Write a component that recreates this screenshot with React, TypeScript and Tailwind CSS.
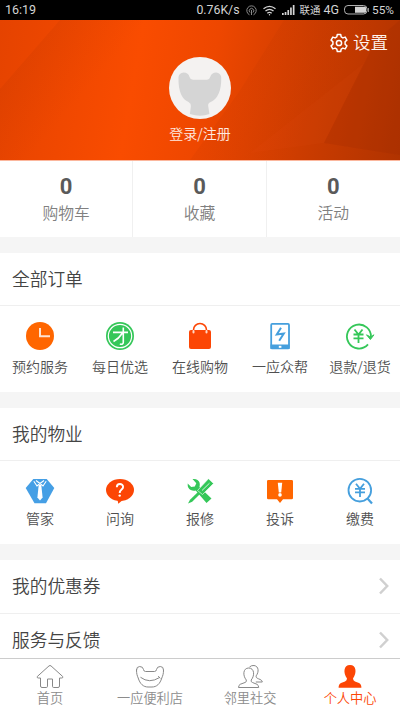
import { ReactNode } from "react";

const stats = [
  { value: 0, label: "购物车" },
  { value: 0, label: "收藏" },
  { value: 0, label: "活动" },
];

function ClockIcon() {
  return (
    <svg width="28" height="28" viewBox="0 0 28 28" fill="none">
      <circle cx="14" cy="14" r="14" fill="#ff6600" />
      <path d="M14 6v8.2h10" stroke="#ffe3d0" strokeWidth="2" />
    </svg>
  );
}

function GroupIcon() {
  return (
    <svg width="28" height="28" viewBox="0 0 28 28" fill="none">
      <circle cx="14" cy="14" r="14" fill="#35c759" />
      <circle cx="14" cy="14" r="11.7" stroke="#fff" strokeWidth="1.2" />
      <path
        d="M7 10.400h15M17.300 5.500v14.800q0 2.700-3.500 1.700M16.500 11q-3.500 5.500-9 8.500"
        stroke="#fff"
        strokeWidth="1.6"
      />
    </svg>
  );
}

function BagIcon() {
  return (
    <svg width="28" height="28" viewBox="0 0 28 28" fill="none">
      <path d="M7.500 10V8a6.500 6.500 0 0 1 13 0v2" stroke="#fc4605" strokeWidth="1.600" />
      <rect x="3" y="8" width="22" height="19" rx="2" fill="#fc4605" />
      <path d="M7.500 9v1.600M20.500 9v1.600" stroke="#ffd9c8" strokeWidth="2" strokeLinecap="round" />
    </svg>
  );
}

function PhoneIcon() {
  return (
    <svg width="28" height="28" viewBox="0 0 28 28" fill="none">
      <rect x="5.200" y="1.900" width="17.800" height="24.500" rx="1" stroke="#459fdd" strokeWidth="1.800" />
      <path d="M4.500 22.500h19V27h-19z" fill="#459fdd" />
      <rect x="12.800" y="23.800" width="2.600" height="2" fill="#fff" />
      <path d="M15 5.800l-4.200 6.700 7-1L13.200 18.800" stroke="#459fdd" strokeWidth="2" />
    </svg>
  );
}

function RefundIcon() {
  return (
    <svg width="30" height="28" viewBox="0 0 30 28" fill="none" stroke="#35c759" strokeWidth="1.800">
      <path d="M23 22.400A12 12 0 1 1 25.900 15.500" />
      <path d="M21.500 12.800l4.200 2.200 3.300-2.200-3.600 4.700z" fill="#35c759" strokeWidth="1" />
      <path d="M9.500 7.500l4 5 4-5M8.500 12.500h10M8.500 16.300h10M13.500 12.500V21" />
    </svg>
  );
}

function ButlerIcon() {
  return (
    <svg width="30" height="28" viewBox="0 0 30 28" fill="none">
      <path d="M8.300 2h13.400l7.600 9L21 26.300H9.500L.7 11z" fill="#459fe5" />
      <path d="M8.800 4.200l3.200 4.800 3-2.500 3 2.500 3.200-4.800M11 3.500l4 3 4-3" stroke="#fff" strokeWidth="1.100" />
      <path d="M13.700 8h2.600l1.300 12.500-2.600 3-2.600-3z" fill="#fff" />
    </svg>
  );
}

function AskIcon() {
  return (
    <svg width="28" height="28" viewBox="0 0 28 28" fill="none">
      <ellipse cx="14" cy="13" rx="14" ry="10.900" fill="#fc4605" />
      <path d="M11.500 22.500l.8 4.200 5-4.200z" fill="#fc4605" />
      <path
        d="M10.800 10.300c0-4.500 6.300-4.200 6.300-.4 0 2.600-3.400 2.600-3.400 6"
        stroke="#fff"
        strokeWidth="1.900"
      />
      <circle cx="13.700" cy="18.600" r="1.200" fill="#fff" />
    </svg>
  );
}

function RepairIcon() {
  return (
    <svg width="28" height="28" viewBox="0 0 28 28" fill="none">
      <path
        d="M1.700 6.500q-.4 4.700 3 6.500 2.700 1.200 5 .5L20.500 26l5-4.500L13.500 10Q14.700 5 11.500 3 9.500 1.500 6.500 2l3.800 4.200-1.500 3.300-3.600.6z"
        fill="#35c759"
      />
      <path d="M11.500 13.500L22.500 1.700l5 4.800-11 11z" fill="#35c759" stroke="#fff" strokeWidth=".6" />
      <path d="M12 15L4 22.700 2 26.500l4.200-1.700L14 17z" fill="#35c759" />
      <path d="M16 13.500l7.500-7.300" stroke="#fff" strokeWidth=".8" />
    </svg>
  );
}

function ComplainIcon() {
  return (
    <svg width="28" height="28" viewBox="0 0 28 28" fill="none">
      <path d="M2.300 3h23.400q1.300 0 1.300 1.300v16.700q0 1.300-1.300 1.300H17l-3 3.700-3-3.700H2.300Q1 22.300 1 21V4.300Q1 3 2.300 3z" fill="#ff6600" />
      <path d="M11.800 5.700h4.400l-1 9.800h-2.400z" fill="#fff" />
      <circle cx="14" cy="17.900" r="1.800" fill="#fff" />
    </svg>
  );
}

function PayIcon() {
  return (
    <svg width="28" height="28" viewBox="0 0 28 28" fill="none" stroke="#459fdd" strokeWidth="1.800">
      <circle cx="13.800" cy="13.200" r="11.300" />
      <path d="M21.500 21.500l4.500 5" strokeWidth="2.200" />
      <path d="M10 6.800l4 5 4-5M9 11.800h10M9 15.400h10M14 11.800V20" />
    </svg>
  );
}

function GearIcon() {
  return (
    <svg width="18" height="20" viewBox="0 0 18 20" fill="none" stroke="#fff" strokeWidth="1.500" strokeLinejoin="round">
      <path d="M7.300 1.500h3.400l.5 2.400 1.700 1 2.300-.8 1.700 3-1.800 1.700v2.400l1.800 1.700-1.700 3-2.300-.8-1.700 1-.5 2.400H7.300l-.5-2.400-1.700-1-2.300.8-1.700-3 1.800-1.700V8.800L1.100 7.100l1.700-3 2.300.8 1.700-1z" />
      <circle cx="9" cy="10" r="2.600" />
    </svg>
  );
}

function HomeIcon() {
  return (
    <svg width="28" height="26" viewBox="0 0 28 26" fill="none" stroke="#888" strokeWidth="1" strokeLinejoin="round">
      <path d="M13 1.900L1.300 12.500q-.6 1.500 1 1.500h2.200v8q0 1.500 1.500 1.500h4.300q1.200 0 1.200-1.200V15h5v7.300q0 1.200 1.200 1.200H22q1.500 0 1.500-1.500v-8h2.200q1.600 0 1-1.500L15 1.900q-1-.8-2 0z" />
    </svg>
  );
}

function ShopIcon() {
  return (
    <svg width="30" height="26" viewBox="0 0 30 26" fill="none" stroke="#888" strokeWidth="1" strokeLinecap="round">
      <path d="M1.500 6Q1.500 2.500 4.700 2.500 8 2.500 8.500 5.500q.3 2 2 2h9q1.700 0 2-2 .5-3 3.800-3 3.200 0 3.200 3.500c0 4-.7 5.500-1.700 8C25 20 21.500 23 17 23h-4C8.500 23 5 20 3.200 14 2.200 11.500 1.500 10 1.500 6z" />
      <path d="M5.800 13.500q8.500 6.500 18.500.2M23.500 12.400l1.500 1.700" />
    </svg>
  );
}

function FriendsIcon() {
  return (
    <svg width="26" height="26" viewBox="0 0 26 26" fill="none" stroke="#888" strokeWidth="1" strokeLinejoin="round">
      <path d="M9.300 16C5.500 11.500 6 4 11.700 4S18 11.500 14.200 16q-.5 2 1.300 2.500l4.500 1.800q1.500.7 1.700 3.200H1.500q.2-2.500 1.700-3.200L8 18.500q1.800-.5 1.300-2.500z" />
      <path d="M12.500 3Q14.500 1.200 17 1.500c5 .7 5 6.500 2.200 10.300-.4 1.500.3 2.200 2.300 3 2.500 1 3.500 1.500 3.800 3.200h-6.500" />
    </svg>
  );
}

function ProfileIcon() {
  return (
    <svg width="26" height="26" viewBox="0 0 26 26" fill="#fc4605">
      <path d="M10 14.500C6 9 6.500 1 13 1s7 8 3 13.500q0 2.200 2 2.900l4 1.500q2.400 1 2.400 4.800H1.600q0-3.800 2.400-4.800l4-1.500q2-.7 2-2.900z" />
    </svg>
  );
}

function Chevron() {
  return (
    <svg width="10" height="18" viewBox="0 0 10 18" fill="none" stroke="#d0d0d0" strokeWidth="2.500">
      <path d="M1 1.500L8.200 9 1 16.500" />
    </svg>
  );
}

function StatusBar() {
  return (
    <header className="flex h-5 items-center bg-black pl-[5px] pr-[6px] font-['Roboto','Noto_Sans_CJK_SC',sans-serif] text-[12px] font-normal leading-5 text-[#d4d4d4]">
      <span className="text-[12.500px]">16:19</span>
      <span className="ml-auto text-[12.300px]">0.76K/s</span>
      <svg className="ml-[6px]" width="11" height="11" viewBox="0 0 11 11" fill="none" stroke="#888">
        <path d="M3.500 9.800a4.700 4.700 0 1 1 4 0" />
        <path d="M4 7.500a2.300 2.300 0 1 1 3 0M5.500 5v5" />
      </svg>
      <svg className="ml-[6px]" width="13" height="11" viewBox="0 0 13 11" fill="none" stroke="#d4d4d4" strokeWidth="1.300">
        <path d="M.5 3.800q6-5 12 0M2.500 6q4-3.400 8 0M4.300 8.200q2.200-1.800 4.400 0" />
        <circle cx="6.500" cy="9.700" r=".7" fill="#d4d4d4" stroke="none" />
      </svg>
      <svg className="ml-[6px]" width="13" height="10" viewBox="0 0 13 10" fill="#d4d4d4">
        <path d="M0 8h1.700v2H0zM2.700 7h1.700v3H2.700zM5.400 5h1.700v5H5.400zM8.100 2.500h1.700V10H8.100zM10.800 0h1.700v10h-1.700z" />
      </svg>
      <span className="ml-[5px] whitespace-nowrap font-['Noto_Sans_CJK_SC',sans-serif] text-[10.500px]">联通</span>
      <span className="ml-[3px] text-[12.500px]">4G</span>
      <svg className="ml-[5px]" width="25" height="10" viewBox="0 0 25 10" fill="none">
        <rect x=".5" y=".5" width="22.500" height="8.500" rx="3.500" stroke="#b0b0b0" />
        <path d="M11 1.800h10q1 0 1 1v4q0 1-1 1H11z" fill="#d4d4d4" />
        <path d="M24.300 3v4" stroke="#b0b0b0" />
      </svg>
      <span className="ml-[3px] text-[11.800px]">55%</span>
    </header>
  );
}

function Banner() {
  return (
    <section className="relative h-[140px] overflow-hidden bg-[linear-gradient(100deg,#e54300_0%,#f94c00_34%,#ee4700_52%,#cc3c00_76%,#b03300_100%)]">
      <svg className="absolute inset-0" width="400" height="140" viewBox="0 0 400 140">
        <defs>
          <linearGradient id="fold" gradientUnits="userSpaceOnUse" x1="28" y1="34" x2="80" y2="79">
            <stop offset="0" stopColor="#a02c00" stopOpacity="0.11" />
            <stop offset="1" stopColor="#a02c00" stopOpacity="0" />
          </linearGradient>
          <linearGradient id="shade" gradientUnits="userSpaceOnUse" x1="260" y1="36" x2="330" y2="80">
            <stop offset="0" stopColor="#a02c00" stopOpacity="0.08" />
            <stop offset="1" stopColor="#a02c00" stopOpacity="0" />
          </linearGradient>
        </defs>
        <path d="M60 0L0 69V140H200V0z" fill="url(#fold)" />
        <path d="M284 0L239 72 190 140H400V0z" fill="url(#shade)" />
        <path d="M376 20L324 123 400 135V0z" fill="#962900" opacity="0.18" />
        <path d="M250 133l74-10 40-80z" fill="#ff6a20" opacity="0.05" />
      </svg>
      <div className="relative flex h-full flex-col items-center">
        <div className="flex h-[37px] items-start gap-[5px] self-end pr-3 pt-2">
          <div className="flex h-7 items-center pt-[2px]">
            <GearIcon />
          </div>
          <span className="text-[17.500px] leading-7 text-[#fff3ed]">设置</span>
        </div>
        <svg width="62" height="62" viewBox="0 0 62 62">
          <circle cx="31" cy="31" r="31" fill="#f4f2f1" />
          <path
            d="M9.500 20q.5-4 5-4.500 5 0 6 4.500.7 2.700 3.500 2.700h14q2.500 0 3.200-2.700 1.300-4.500 6-4.500 4.300.5 5 4.500c.5 14-4 22.500-10.500 25-2.200 1-2.800 2-2.500 4l1.200 8q-9 3.500-19.500 0l1-8q.3-2.500-2.400-4C13.500 42.500 9 35 9.500 20z"
            fill="#d5d5d5"
          />
        </svg>
        <span className="mt-[4px] text-[14px] leading-5 text-[#ffeae0]">登录/注册</span>
      </div>
    </section>
  );
}

interface MenuItem {
  label: string;
  icon: ReactNode;
}

const orders: MenuItem[] = [
  { label: "预约服务", icon: <ClockIcon /> },
  { label: "每日优选", icon: <GroupIcon /> },
  { label: "在线购物", icon: <BagIcon /> },
  { label: "一应众帮", icon: <PhoneIcon /> },
  { label: "退款/退货", icon: <RefundIcon /> },
];

const property: MenuItem[] = [
  { label: "管家", icon: <ButlerIcon /> },
  { label: "问询", icon: <AskIcon /> },
  { label: "报修", icon: <RepairIcon /> },
  { label: "投诉", icon: <ComplainIcon /> },
  { label: "缴费", icon: <PayIcon /> },
];

function MenuGrid({ items, className }: { items: MenuItem[]; className: string }) {
  return (
    <div className={`grid grid-cols-5 ${className}`}>
      {items.map((item) => (
        <div key={item.label} className="flex flex-col items-center">
          {item.icon}
          <span className="whitespace-nowrap text-[14px] leading-5 text-[#505050]">{item.label}</span>
        </div>
      ))}
    </div>
  );
}

function SectionTitle({ title }: { title: string }) {
  return (
    <h2 className="h-[53px] border-b border-[#efefef] px-3 text-[17.700px] leading-[50px] text-[#444]">
      {title}
    </h2>
  );
}

const tabs = [
  { label: "首页", icon: <HomeIcon />, active: false },
  { label: "一应便利店", icon: <ShopIcon />, active: false },
  { label: "邻里社交", icon: <FriendsIcon />, active: false },
  { label: "个人中心", icon: <ProfileIcon />, active: true },
];

export default function App() {
  return (
    <div className="flex h-[711px] w-[400px] flex-col overflow-hidden bg-[#f5f5f5] font-['Noto_Sans_CJK_SC',sans-serif] font-[350]">
      <StatusBar />
      <Banner />

      <section className="grid h-[77px] grid-cols-3 divide-x divide-[#f0f0f0] border-t border-[#fbb79d] bg-white">
        {stats.map((stat) => (
          <div key={stat.label} className="flex flex-col items-center pt-[13px]">
            <span className="font-['Roboto',sans-serif] text-[22px] font-bold leading-[26px] text-[#5a5a5a]">
              {stat.value}
            </span>
            <span className="mt-px text-[15.800px] leading-6 text-[#808080]">{stat.label}</span>
          </div>
        ))}
      </section>

      <section className="mt-4 h-[139px] bg-white">
        <SectionTitle title="全部订单" />
        <MenuGrid items={orders} className="pt-4 [&_span]:mt-[6px]" />
      </section>

      <section className="mt-4 h-[136px] bg-white">
        <SectionTitle title="我的物业" />
        <MenuGrid items={property} className="pt-4 [&_span]:mt-[3px]" />
      </section>

      <section className="mt-4 flex-1 overflow-hidden bg-white">
        {["我的优惠券", "服务与反馈"].map((title) => (
          <div
            key={title}
            className="flex h-[54px] items-start justify-between border-b border-[#efefef] pl-3 pr-[11px] text-[17.700px] text-[#444]"
          >
            <span className="leading-[50px]">{title}</span>
            <div className="pt-[17px]">
              <Chevron />
            </div>
          </div>
        ))}
      </section>

      <nav className="grid h-[53px] grid-cols-4 border-t border-[#ccc] bg-white">
        {tabs.map((tab) => (
          <div
            key={tab.label}
            className={`flex flex-col items-center pt-[5px] text-[13.200px] ${
              tab.active ? "text-[#fc4605]" : "text-[#8c8c8c]"
            }`}
          >
            {tab.icon}
            <span className="-mt-px leading-[18px]">{tab.label}</span>
          </div>
        ))}
      </nav>
    </div>
  );
}
